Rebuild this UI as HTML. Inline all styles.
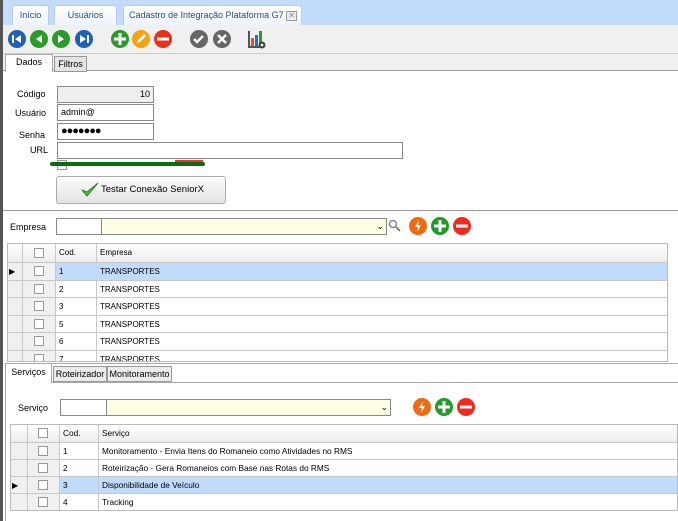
<!DOCTYPE html>
<html><head><meta charset="utf-8"><style>
*{box-sizing:border-box;margin:0;padding:0}
body{width:678px;height:521px;overflow:hidden;background:#fff;font-family:"Liberation Sans",sans-serif;font-size:9px;color:#000;position:relative}
.a{position:absolute}
.tab{position:absolute;top:5px;height:20px;background:linear-gradient(#fff,#eef4fb);border:1px solid #b9cde4;border-bottom:none;border-radius:3px 3px 0 0;color:#2a4f7a;font-size:9px;text-align:center;line-height:19px}
.inp{position:absolute;border:1px solid #888;background:#fff;height:17px;font-size:9px;line-height:15px;padding:0 3px}
.lbl{position:absolute;font-size:9px}
.cb{position:absolute;width:10px;height:10px;border:1px solid #999;background:#fff}
.row{position:absolute;left:0;right:0;border-bottom:1px solid #c8c8c8}
.cell{position:absolute;top:0;bottom:0;border-right:1px solid #c8c8c8;padding-left:3px;line-height:17px}
.g1 .cell{font-size:8px}
.g2 .cell{font-size:8.3px}
.ptab{position:absolute;height:16px;border:1px solid #999;background:#ececec;font-size:9px;line-height:14px;text-align:center}
</style></head><body>
<div class="a" style="left:0;top:0;width:678px;height:25px;background:#c4dcfb"></div>
<div class="a" style="left:0;top:0;width:3px;height:521px;background:#555"></div>
<div class="tab" style="left:12px;width:37px">Início</div>
<div class="tab" style="left:54px;width:63px">Usuários</div>
<div class="tab" style="left:123px;width:179px;text-align:left;padding-left:5px">Cadastro de Integração Plataforma G7 <span style="display:inline-block;width:11px;height:10px;border:1px solid #999;background:#eee;font-size:8px;line-height:8px;text-align:center;color:#888;vertical-align:middle">✕</span></div>
<div class="a" style="left:3px;top:25px;width:675px;height:28px;background:#f0f0f0"></div>
<div class="a" style="left:3px;top:53px;width:675px;height:18px;background:#f0f0f0;border-top:1px solid #ccc;border-bottom:1px solid #999"></div>
<svg class="a" style="left:0;top:25px" width="280" height="28">
<g fill="#1f5fb8"><circle cx="17" cy="14" r="9"/><circle cx="84" cy="14" r="9"/></g>
<g fill="#2c9a2c"><circle cx="39" cy="14" r="9"/><circle cx="61" cy="14" r="9"/><circle cx="120" cy="14" r="9"/></g>
<circle cx="141" cy="14" r="9" fill="#f5a315"/><circle cx="163" cy="14" r="9" fill="#e8301f"/>
<g fill="#666"><circle cx="199" cy="14" r="9"/><circle cx="222" cy="14" r="9"/></g>
<g fill="#fff"><rect x="12" y="10" width="2" height="8"/><path d="M21 10v8l-6-4z"/><path d="M42 10v8l-6-4z"/><path d="M58 10v8l6-4z"/><path d="M80 10v8l6-4z"/><rect x="87" y="10" width="2" height="8"/>
<rect x="114" y="12.5" width="12" height="3"/><rect x="118.5" y="8" width="3" height="12"/><rect x="157" y="12.5" width="12" height="3"/></g>
<path d="M137 18l1-3 6-6 2 2-6 6z" fill="#fff"/>
<path d="M194 14l3 3 6-6" stroke="#fff" stroke-width="2.5" fill="none"/>
<path d="M218 10l8 8M226 10l-8 8" stroke="#fff" stroke-width="2.5"/>
<rect x="248" y="6" width="2" height="17" fill="#555"/><rect x="248" y="21" width="15" height="2" fill="#555"/>
<rect x="251" y="13" width="3" height="8" fill="#e8502a"/><rect x="255" y="10" width="3" height="11" fill="#2c6ad0"/><rect x="259" y="6" width="3" height="13" fill="#2c9a2c"/>
<circle cx="262" cy="20" r="3.5" fill="#444"/><circle cx="262" cy="20" r="1.3" fill="#fff"/>
</svg>
<div class="a" style="left:5px;top:54px;width:48px;height:18px;background:#fff;border:1px solid #aaa;border-bottom:none;text-align:center;line-height:15px;font-size:9px">Dados</div>
<div class="ptab" style="left:54px;top:56px;width:33px;background:#e4e4e4">Filtros</div>
<div class="lbl" style="left:17px;top:89px">Código</div>
<div class="inp" style="left:57px;top:86px;width:97px;background:#efefef;text-align:right">10</div>
<div class="lbl" style="left:15px;top:108px">Usuário</div>
<div class="inp" style="left:57px;top:104px;width:97px">admin@</div>
<div class="lbl" style="left:19px;top:130px">Senha</div>
<div class="inp" style="left:57px;top:123px;width:97px;font-size:11px;letter-spacing:-1px">●●●●●●●</div>
<div class="lbl" style="left:30px;top:145px">URL</div>
<div class="inp" style="left:57px;top:142px;width:346px"></div>
<div class="cb" style="left:57px;top:160px"></div>
<div class="a" style="left:175px;top:160px;width:28px;height:4px;background:#e33"></div>
<div class="a" style="left:50px;top:162px;width:155px;height:4px;background:#0b6b10;border-radius:2px"></div>
<div class="a" style="left:56px;top:176px;width:170px;height:28px;border:1px solid #aaa;border-radius:3px;background:linear-gradient(#fdfdfd,#e3e3e3);font-size:9.5px;line-height:26px;padding-left:44px">Testar Conexão SeniorX</div>
<svg class="a" style="left:80px;top:181px" width="20" height="18"><path d="M2 9l5 6L18 2 7 11z" fill="#4cc23a" stroke="#2a8a22" stroke-width="1"/></svg>
<div class="a" style="left:3px;top:210px;width:675px;height:1px;background:#999"></div>
<div class="lbl" style="left:10px;top:222px">Empresa</div>
<div class="inp" style="left:56px;top:218px;width:46px"></div>
<div class="inp" style="left:101px;top:218px;width:286px;background:#fefee3"><span style="position:absolute;right:2px;top:0">⌄</span></div>
<svg class="a" style="left:388px;top:219px" width="14" height="14"><circle cx="5" cy="5" r="3.5" stroke="#777" fill="none" stroke-width="1.3"/><path d="M8 8l4 4" stroke="#777" stroke-width="1.8"/></svg>
<svg class="a" style="left:408px;top:216px" width="64" height="20">
<circle cx="10" cy="10" r="9" fill="#f06a12"/><circle cx="32" cy="10" r="9" fill="#249a2a"/><circle cx="54" cy="10" r="9" fill="#f02a1c"/>
<path d="M11 4l-4 7h3l-1 5 4-7h-3z" fill="#fff"/><rect x="26" y="8.5" width="12" height="3" fill="#fff"/><rect x="30.5" y="4" width="3" height="12" fill="#fff"/><rect x="48" y="8.5" width="12" height="3" fill="#fff"/>
</svg>
<div class="a g1" style="left:7px;top:243px;width:661px;height:119px;border:1px solid #bbb;overflow:hidden">
<div class="row" style="top:0;height:19px;background:linear-gradient(#fff,#ececec)"><div class="cell" style="left:0;width:15px"></div><div class="cell" style="left:15px;width:33px"><div class="cb" style="left:11px;top:4px"></div></div><div class="cell" style="left:48px;width:41px;line-height:18px">Cod.</div><div class="cell" style="left:89px;width:572px;line-height:18px">Empresa</div></div>
<div class="row" style="top:19px;height:17.5px"><div class="cell" style="left:0;width:15px;background:#f0f0f0;font-size:8px;padding-left:1px">▶</div><div class="cell" style="left:15px;width:33px;background:#f0f0f0"><div class="cb" style="left:11px;top:3px"></div></div><div class="cell" style="left:48px;width:613px;background:#c1dbfa;border:none">1<span style="position:absolute;left:44px">TRANSPORTES</span></div></div>
<div class="row" style="top:36.5px;height:17.5px"><div class="cell" style="left:0;width:15px;background:#f0f0f0"></div><div class="cell" style="left:15px;width:33px;background:#f0f0f0"><div class="cb" style="left:11px;top:3px"></div></div><div class="cell" style="left:48px;width:41px">2</div><div class="cell" style="left:89px;width:572px">TRANSPORTES</div></div>
<div class="row" style="top:54px;height:17.5px"><div class="cell" style="left:0;width:15px;background:#f0f0f0"></div><div class="cell" style="left:15px;width:33px;background:#f0f0f0"><div class="cb" style="left:11px;top:3px"></div></div><div class="cell" style="left:48px;width:41px">3</div><div class="cell" style="left:89px;width:572px">TRANSPORTES</div></div>
<div class="row" style="top:71.5px;height:17.5px"><div class="cell" style="left:0;width:15px;background:#f0f0f0"></div><div class="cell" style="left:15px;width:33px;background:#f0f0f0"><div class="cb" style="left:11px;top:3px"></div></div><div class="cell" style="left:48px;width:41px">5</div><div class="cell" style="left:89px;width:572px">TRANSPORTES</div></div>
<div class="row" style="top:89px;height:17.5px"><div class="cell" style="left:0;width:15px;background:#f0f0f0"></div><div class="cell" style="left:15px;width:33px;background:#f0f0f0"><div class="cb" style="left:11px;top:3px"></div></div><div class="cell" style="left:48px;width:41px">6</div><div class="cell" style="left:89px;width:572px">TRANSPORTES</div></div>
<div class="row" style="top:106.5px;height:17.5px"><div class="cell" style="left:0;width:15px;background:#f0f0f0"></div><div class="cell" style="left:15px;width:33px;background:#f0f0f0"><div class="cb" style="left:11px;top:3px"></div></div><div class="cell" style="left:48px;width:41px">7</div><div class="cell" style="left:89px;width:572px">TRANSPORTES .</div></div>
</div>
<div class="a" style="left:5px;top:363px;width:673px;height:158px;border-left:1px solid #aaa;border-top:1px solid #aaa"></div>
<div class="a" style="left:5px;top:382px;width:673px;height:1px;background:#aaa"></div>
<div class="a" style="left:6px;top:364px;width:46px;height:19px;background:#fff;text-align:center;line-height:17px;font-size:9px;border-right:1px solid #aaa">Serviços</div>
<div class="ptab" style="left:53px;top:366px;width:54px">Roteirizador</div>
<div class="ptab" style="left:107px;top:366px;width:65px">Monitoramento</div>
<div class="lbl" style="left:18px;top:403px">Serviço</div>
<div class="inp" style="left:60px;top:399px;width:47px"></div>
<div class="inp" style="left:106px;top:399px;width:285px;background:#fefee3"><span style="position:absolute;right:2px;top:0">⌄</span></div>
<svg class="a" style="left:412px;top:397px" width="64" height="20">
<circle cx="10" cy="10" r="9" fill="#f06a12"/><circle cx="32" cy="10" r="9" fill="#249a2a"/><circle cx="54" cy="10" r="9" fill="#f02a1c"/>
<path d="M11 4l-4 7h3l-1 5 4-7h-3z" fill="#fff"/><rect x="26" y="8.5" width="12" height="3" fill="#fff"/><rect x="30.5" y="4" width="3" height="12" fill="#fff"/><rect x="48" y="8.5" width="12" height="3" fill="#fff"/>
</svg>
<div class="a g2" style="left:10px;top:424px;width:668px;height:87px;border:1px solid #bbb;overflow:hidden">
<div class="row" style="top:0;height:18px;background:linear-gradient(#fff,#ececec)"><div class="cell" style="left:0;width:17px"></div><div class="cell" style="left:17px;width:32px"><div class="cb" style="left:10px;top:3px"></div></div><div class="cell" style="left:49px;width:39px">Cod.</div><div class="cell" style="left:88px;width:580px">Serviço</div></div>
<div class="row" style="top:18px;height:17px"><div class="cell" style="left:0;width:17px;background:#f0f0f0"></div><div class="cell" style="left:17px;width:32px;background:#f0f0f0"><div class="cb" style="left:10px;top:3px"></div></div><div class="cell" style="left:49px;width:39px">1</div><div class="cell" style="left:88px;width:580px">Monitoramento - Envia Itens do Romaneio como Atividades no RMS</div></div>
<div class="row" style="top:35px;height:17px"><div class="cell" style="left:0;width:17px;background:#f0f0f0"></div><div class="cell" style="left:17px;width:32px;background:#f0f0f0"><div class="cb" style="left:10px;top:3px"></div></div><div class="cell" style="left:49px;width:39px">2</div><div class="cell" style="left:88px;width:580px">Roteirização - Gera Romaneios com Base nas Rotas do RMS</div></div>
<div class="row" style="top:52px;height:17px;background:#c1dbfa"><div class="cell" style="left:0;width:17px;background:#f0f0f0;font-size:8px;padding-left:1px">▶</div><div class="cell" style="left:17px;width:32px;background:#f0f0f0"><div class="cb" style="left:10px;top:3px"></div></div><div class="cell" style="left:49px;width:39px">3</div><div class="cell" style="left:88px;width:580px;border:none">Disponibilidade de Veículo</div></div>
<div class="row" style="top:69px;height:17px"><div class="cell" style="left:0;width:17px;background:#f0f0f0"></div><div class="cell" style="left:17px;width:32px;background:#f0f0f0"><div class="cb" style="left:10px;top:3px"></div></div><div class="cell" style="left:49px;width:39px">4</div><div class="cell" style="left:88px;width:580px">Tracking</div></div>
</div>
</body></html>
